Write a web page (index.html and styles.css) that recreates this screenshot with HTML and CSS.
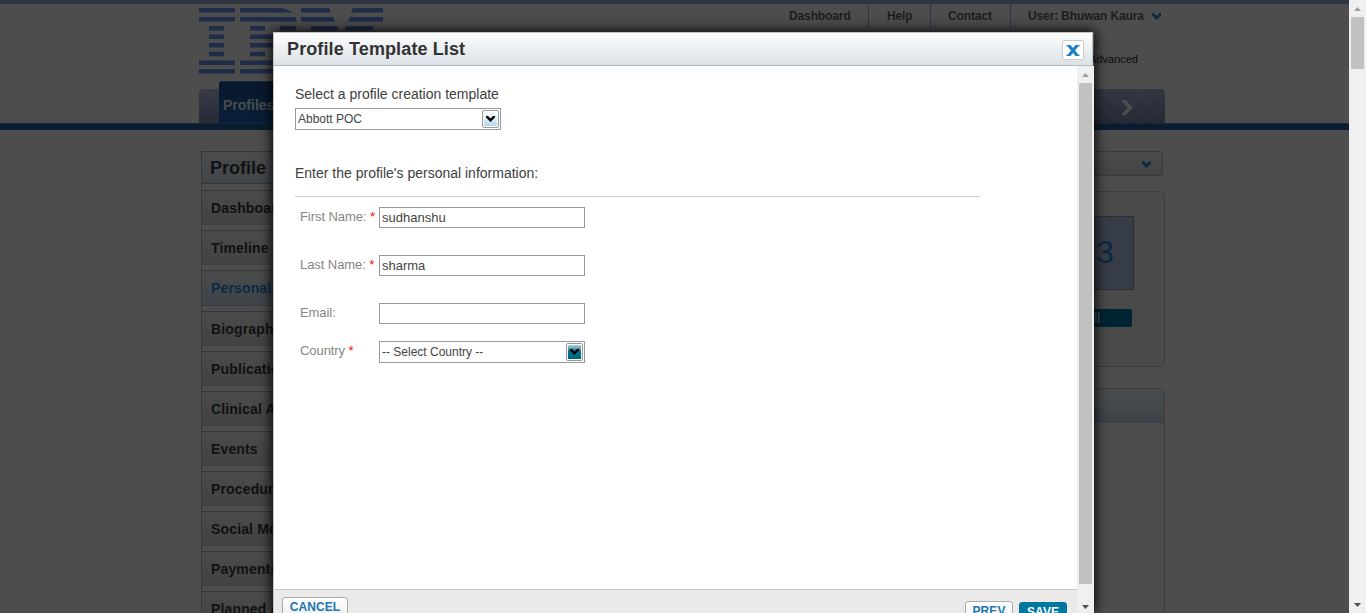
FILE: index.html
```
<!DOCTYPE html>
<html lang="en">
<head>
<meta charset="utf-8">
<title>Profile Template List</title>
<link rel="stylesheet" href="styles.css">
</head>
<body>
<div class="window">
  <div class="page">
    <header class="header">
      <svg class="logo" width="185" height="66" viewBox="0 0 185 66" fill="#1f2c47">
        <path d="M0 0h36v4.500H0zM0 9h36v4.500H0zM10 18h15v4.500H10zM10 26.400h15v4.500H10zM10 35h15v4.500H10zM10 43.800h15v4.500H10zM0 52.500h36v4.500H0zM0 61h36v4.500H0z"/>
        <path d="M41 0h41q7 1 12 4.500H41zM41 9h55l2 4.500H41zM51 18h15v4.500H51zM81 18h17l-2 4.500H81zM51 26.400h42v4.500H51zM51 35h42v4.500H51zM51 43.800h15v4.500H51zM41 52.500h57v4.500H41zM41 61h50v4.500H41z"/>
        <path d="M102 0h28l2 4.500h-30zM154 0h30v4.500h-32zM102 9h32l2 4.500h-34zM151 9h33v4.500h-35zM112 18h26l2 4.500h-28zM147 18h27v4.500h-29z"/>
      </svg>
      <div class="header-right">
        <nav class="top-nav">
          <a class="nav-dashboard">Dashboard</a><a class="nav-help">Help</a><a class="nav-contact">Contact</a><a class="nav-user">User: Bhuwan Kaura
          <svg width="9" height="7" viewBox="0 0 9 7"><path d="M0 0h1.500l3 3 3-3H9v2.500L4.500 7 0 2.500z" fill="#092b43"/></svg></a>
        </nav>
        <a class="advanced">Advanced</a>
      </div>
    </header>
    <div class="tabs">
      <div class="tab-edge"></div>
      <div class="tab-active">Profiles</div>
      <div class="tab-more"><svg width="12" height="15" viewBox="0 0 12 15"><path d="M0 0h4.500L12 7.500 4.500 15H0l6.500-7.500z" fill="#4c4d4f"/></svg></div>
    </div>
    <div class="tab-line"></div>
    <div class="content">
      <aside class="sidebar">
        <h2 class="side-title">Profile</h2>
        <ul class="side-list">
          <li>Dashboard</li><li>Timeline</li><li class="current">Personal</li><li>Biography</li><li>Publications</li><li>Clinical Activity</li><li>Events</li><li>Procedures</li><li>Social Media</li><li>Payments</li><li>Planned Activity</li>
        </ul>
      </aside>
      <main class="main">
        <div class="dropdown"><svg width="9" height="7" viewBox="0 0 9 7"><path d="M0 0h1.500l3 3 3-3H9v2.500L4.500 7 0 2.500z" fill="#092b43"/></svg></div>
        <section class="score-card">
          <div class="score">3</div>
          <div class="score-button">ll</div>
        </section>
        <section class="panel"><div class="panel-head"></div></section>
      </main>
    </div>
  </div>
  <div class="scrollbar page-scroll">
    <svg class="arrow" width="7" height="4" viewBox="0 0 7 4"><path d="M3.500 0L7 4H0z" fill="#a0a0a0"/></svg>
    <div class="thumb"></div>
    <svg class="arrow" width="7" height="4" viewBox="0 0 7 4"><path d="M0 0h7L3.500 4z" fill="#505050"/></svg>
  </div>
</div>

<div class="modal">
  <div class="modal-head">
    <h1 class="modal-title">Profile Template List</h1>
    <div class="close"><svg width="14" height="11" viewBox="0 0 14 11"><path d="M.500 0H4.500L7 3 9.500 0h4v1.200h-1L9 5.500l3.500 4.300h1V11h-4L7 8l-2.500 3h-4V9.800h1L5 5.500 1.500 1.200h-1z" fill="#1b80c8"/></svg></div>
  </div>
  <div class="modal-view">
    <div class="modal-main">
      <form class="form">
        <p class="lead">Select a profile creation template</p>
        <div class="field select"><span>Abbott POC</span><i class="toggle"><svg width="9" height="6" viewBox="0 0 9 6"><path d="M0 0h2l2.500 2.500L7 0h2v1.500L4.500 6 0 1.500z" fill="#000"/></svg></i></div>
        <p class="lead lead-info">Enter the profile's personal information:</p>
        <div class="fields">
          <div class="row"><label>First Name: <b>*</b></label><div class="field input">sudhanshu</div></div>
          <div class="row"><label>Last Name: <b>*</b></label><div class="field input">sharma</div></div>
          <div class="row row-email"><label>Email:</label><div class="field input"></div></div>
          <div class="row"><label>Country <b>*</b></label><div class="field select"><span>-- Select Country --</span><i class="toggle toggle-dark"><svg width="9" height="6" viewBox="0 0 9 6"><path d="M0 0h2l2.500 2.500L7 0h2v1.500L4.500 6 0 1.500z" fill="#000"/></svg></i></div></div>
        </div>
      </form>
      <footer class="modal-foot">
        <div class="button cancel">CANCEL</div>
        <div class="button prev">PREV</div>
        <div class="button save">SAVE</div>
      </footer>
    </div>
    <div class="scrollbar">
      <svg class="arrow" width="7" height="4" viewBox="0 0 7 4"><path d="M3.500 0L7 4H0z" fill="#a0a0a0"/></svg>
      <div class="thumb"></div>
      <svg class="arrow" width="7" height="4" viewBox="0 0 7 4"><path d="M0 0h7L3.500 4z" fill="#505050"/></svg>
    </div>
  </div>
</div>
</body>
</html>
```
FILE: styles.css
```
* { box-sizing: border-box; }
body { margin: 0; height: 613px; overflow: hidden; position: relative; font-family: "Liberation Sans", Arial, sans-serif; }
h1, h2, p, ul { margin: 0; padding: 0; }
svg { display: block; flex: none; }
.window { display: flex; height: 613px; }
.page { width: 1349px; height: 613px; overflow: hidden; background: #4d4d4d; border-top: 4px solid #2e3642; }

.header { display: flex; justify-content: space-between; width: 966px; height: 77px; margin-left: 199px; }
.logo { margin-top: 4px; }
.header-right { width: 395px; }
.top-nav { display: flex; height: 24px; font-size: 12px; line-height: 24px; font-weight: bold; color: #1d1d1d; }
.top-nav a { border-right: 1px solid #2c3848; white-space: nowrap; letter-spacing: -.12px; }
.nav-dashboard { width: 99px; padding-left: 19px; }
.nav-help { width: 62px; padding-left: 18px; }
.nav-contact { width: 80px; padding-left: 17px; }
.top-nav .nav-user { display: flex; align-items: center; gap: 8px; padding-left: 17px; border: 0; }
.advanced { display: block; margin: 24px 27px 0 0; text-align: right; font-size: 11px; line-height: 14px; color: #0c0c0c; }

.tabs { display: flex; align-items: flex-end; width: 966px; height: 42px; margin-left: 199px; }
.tab-edge { width: 20px; height: 34px; border-radius: 4px 0 0 0; background: repeating-linear-gradient(45deg, #0000 0 1px, #0001 1px 2px), linear-gradient(#3a3d47, #282c37); }
.tab-active { width: 500px; height: 42px; padding: 0 0 0 4px; background: linear-gradient(#08182c, #091f38); border-top: 1px solid #182840; border-radius: 2px 0 0 0; font-size: 14px; line-height: 46px; font-weight: bold; letter-spacing: 0; color: #4a4d50; }
.tab-more { flex: 1; height: 34px; border-radius: 0 4px 0 0; background: repeating-linear-gradient(45deg, #0000 0 1px, #0001 1px 2px), linear-gradient(#343944, #262b36); display: flex; align-items: center; justify-content: flex-end; padding: 2px 32px 0 0; }
.tab-line { height: 7px; background: #0a1d30; border-top: 1px solid #182638; }

.content { display: flex; justify-content: space-between; width: 964px; margin: 21px 0 0 201px; }
.sidebar { width: 210px; border-left: 1px solid #383838; }
.side-title { height: 33px; padding-left: 8px; border: solid #363636; border-width: 1px 0; background: linear-gradient(#4c4c4c, #41464a); font-size: 18px; line-height: 32px; letter-spacing: 0; color: #121212; }
.side-list { list-style: none; padding-top: 6px; }
.side-list li { height: 35px; margin-bottom: 5px; padding-left: 9px; border-top: 1px solid #363636; background: linear-gradient(#4b4b4b, #424242); font-size: 14px; line-height: 35px; font-weight: bold; letter-spacing: .15px; color: #111; white-space: nowrap; overflow: hidden; }
.side-list .current { height: 36px; background: linear-gradient(#4b4b4b, #3d444a); border-bottom: 1px solid #363c40; color: #0b2a43; }

.main { width: 720px; }
.dropdown { height: 25px; margin-right: 2px; border: 1px solid #3a3a3a; border-radius: 3px; background: linear-gradient(#4b4b4b, #444); display: flex; align-items: center; justify-content: flex-end; padding: 2px 11px 0 0; }
.score-card { height: 176px; margin-top: 15px; padding: 24px 30px; border: 1px solid #3d3d3d; border-radius: 5px; background: #4a4a4a; display: flex; flex-direction: column; align-items: flex-end; }
.score { width: 75px; height: 74px; padding-left: 36px; border: 1px solid #2b2e31; background: #373d46; font-size: 32px; line-height: 70px; color: #092a43; }
.score-button { width: 73px; height: 18px; margin: 19px 2px 0 0; padding-left: 35px; border-radius: 2px; background: #002532; font-size: 14px; line-height: 18px; color: #545a5d; }
.panel { height: 240px; margin-top: 21px; border: 1px solid #3d3d3d; border-radius: 5px; }
.panel-head { height: 34px; background: linear-gradient(#484a4b, #464a4c 40%, #3a4148); border-radius: 4px 4px 0 0; }

.scrollbar { width: 17px; flex: none; display: flex; flex-direction: column; align-items: center; background: #f0f0f0; padding: 7px 0 6px; }
.scrollbar .thumb { width: 13px; background: #c1c1c1; }
.page-scroll .thumb { height: 52px; margin: 6px 0 auto; }

.modal { position: absolute; left: 273px; top: 32px; width: 821px; height: 581px; box-shadow: 0 0 12px 1px #000; }
.modal-head { display: flex; justify-content: space-between; width: 820px; height: 34px; padding: 0 8px 0 14px; border: 1px solid #c4c4c4; border-bottom-color: #b5bbc0; background: linear-gradient(#fdfefe, #dbe2e6); }
.modal-title { font-size: 18px; line-height: 33px; letter-spacing: .12px; color: #333; margin-left: -1px; }
.close { width: 22px; height: 20px; margin-top: 7px; border: 1px solid #ccc; border-radius: 2px; background: #fff; display: flex; align-items: center; justify-content: center; }
.modal-view { display: flex; height: 547px; }
.modal-view .scrollbar { padding: 7px 0 4px; }
.modal-view .thumb { height: 501px; margin: 6px 0 auto; }
.modal-main { width: 804px; display: flex; flex-direction: column; background: #fff; border-left: 1px solid #c4c4c4; }
.form { height: 523px; padding: 19px 97px 0 21px; }
.lead { font-size: 14px; line-height: 18px; color: #404040; }
.field { width: 206px; border: 1px solid #999; background: #fff; color: #444; }
.select { display: flex; align-items: center; justify-content: space-between; height: 22px; padding: 0 1px 0 2px; font-size: 12px; line-height: 20px; }
.lead + .select { margin-top: 5px; }
.toggle { width: 17px; height: 18px; border: 1px solid #999; border-radius: 2px; display: flex; align-items: center; justify-content: center; background: linear-gradient(#fff, #b2d8e9) content-box; padding: 1px; }
.toggle-dark { background: linear-gradient(#b9d8e0, #007394 45%, #006080) content-box; }
.lead-info { margin-top: 34px; padding-bottom: 14px; border-bottom: 1px solid #ccc; height: 33px; }
.fields { padding: 10px 0 0 5px; }
.row { display: flex; height: 48px; font-size: 13px; }
.row-email { height: 38px; }
.row label { width: 79px; line-height: 19px; letter-spacing: -.07px; color: #858585; white-space: nowrap; }
.row b { font-weight: normal; color: #e11; }
.input { height: 21px; padding-left: 2px; font-size: 13px; line-height: 20px; }
.modal-foot { flex: 1; display: flex; align-items: flex-start; height: 24px; padding: 7px 10px 0 8px; border-top: 1px solid #c8cbcc; background: #ebeae9; overflow: hidden; }
.button { flex: none; height: 22px; border: 1px solid #aaa; border-radius: 3px; background: linear-gradient(#fff, #eee); font-size: 12px; line-height: 18px; text-align: center; font-weight: bold; color: #1b75b0; letter-spacing: .1px; }
.cancel { width: 66px; }
.prev { width: 48px; margin: 4px 6px 0 auto; }
.save { width: 48px; margin-top: 5px; border-color: #00749b; background: #0079a1; color: #fff; }
```
